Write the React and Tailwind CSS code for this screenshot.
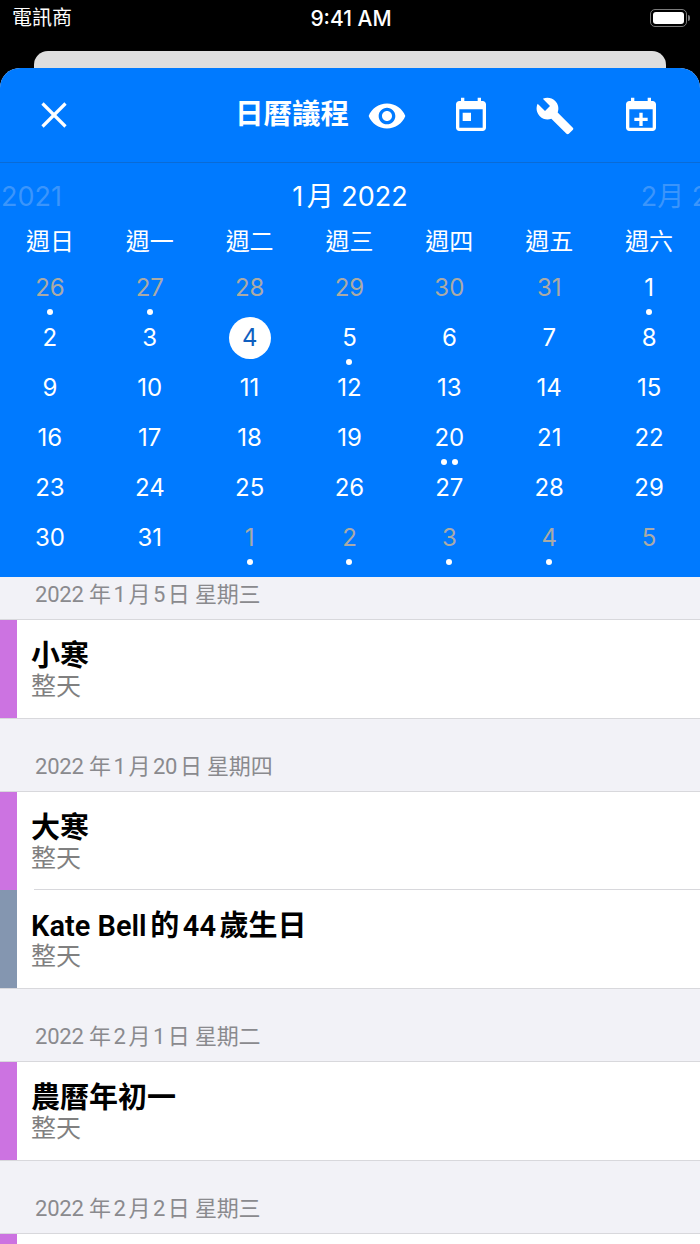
import { X } from 'lucide-react';

const font = { fontFamily: 'Inter, "Noto Sans CJK TC", sans-serif' };
const labelFont = { fontFamily: 'Roboto, "Noto Sans CJK TC", sans-serif' };

const CAL_FRAME = 'M19 3h-1V1h-2v2H8V1H6v2H5c-1.11 0-1.99.9-1.99 2L3 19c0 1.1.89 2 2 2h14c1.1 0 2-.9 2-2V5c0-1.1-.9-2-2-2zm0 16H5V8h14v11z';

const Icon = ({ d, className }) => (
  <svg viewBox="0 0 24 24" fill="white" className={`mt-[2px] h-10 w-10 shrink-0 ${className}`}>
    <path d={d} />
  </svg>
);

const weekdays = ['週日', '週一', '週二', '週三', '週四', '週五', '週六'];

// n = number, muted = other month, dots = event dots, selected = today circle
const weeks = [
  [{ n: 26, muted: true, dots: 1 }, { n: 27, muted: true, dots: 1 }, { n: 28, muted: true }, { n: 29, muted: true }, { n: 30, muted: true }, { n: 31, muted: true }, { n: 1, dots: 1 }],
  [{ n: 2 }, { n: 3 }, { n: 4, selected: true }, { n: 5, dots: 1 }, { n: 6 }, { n: 7 }, { n: 8 }],
  [{ n: 9 }, { n: 10 }, { n: 11 }, { n: 12 }, { n: 13 }, { n: 14 }, { n: 15 }],
  [{ n: 16 }, { n: 17 }, { n: 18 }, { n: 19 }, { n: 20, dots: 2 }, { n: 21 }, { n: 22 }],
  [{ n: 23 }, { n: 24 }, { n: 25 }, { n: 26 }, { n: 27 }, { n: 28 }, { n: 29 }],
  [{ n: 30 }, { n: 31 }, { n: 1, muted: true, dots: 1 }, { n: 2, muted: true, dots: 1 }, { n: 3, muted: true, dots: 1 }, { n: 4, muted: true, dots: 1 }, { n: 5, muted: true }],
];

const Day = ({ day }) => (
  <div className="relative flex h-[50px] items-center justify-center">
    {day.selected && <div className="absolute top-[4px] h-[42px] w-[42px] rounded-full bg-white" />}
    <span className={`relative -mt-[1px] text-[24px] leading-none ${day.selected ? 'text-[#0f5fbf]' : day.muted ? 'text-[#abaaa6]' : 'text-white'}`}>
      {day.n}
    </span>
    {day.dots > 0 && (
      <div className="absolute bottom-[-2px] flex gap-[5px]">
        {Array.from({ length: day.dots }).map((_, i) => (
          <div key={i} className="h-[6px] w-[6px] rounded-full bg-white" />
        ))}
      </div>
    )}
  </div>
);

const Row = ({ color, title, divider }) => (
  <div className="relative flex h-[98px] bg-white">
    <div className={`w-[17px] ${color}`} />
    {title && (
      <div className="pl-[14px] pt-[20px]">
        <div style={labelFont} className="text-[29px] font-semibold leading-[33px] text-black [text-autospace:normal]">{title}</div>
        <div className="-mt-[2px] text-[25px] leading-[30px] text-[#808080]">整天</div>
      </div>
    )}
    {divider && <div className="absolute bottom-0 left-[34px] right-0 h-px bg-[#d8d8dc]" />}
  </div>
);

const SectionHeader = ({ label, first }) => (
  <div className={`flex items-end border-b border-[#d8d8dc] pb-[10px] pl-[35px] ${first ? 'h-[43px]' : 'h-[73px]'}`}>
    <span style={labelFont} className="text-[22px] leading-[28px] tracking-[-0.2px] text-[#8a8a8e] [text-autospace:normal]">{label}</span>
  </div>
);

export default function App() {
  return (
    <div style={font} className="h-[1244px] w-[700px] overflow-hidden bg-black">
      {/* status bar */}
      <div className="flex h-[36px] items-center justify-between pl-[12px] pr-[10px] text-white">
        <span className="w-[120px] text-[20px] leading-none">電訊商</span>
        <span className="text-[21px] font-medium leading-none">9:41 AM</span>
        <div className="flex w-[120px] items-center justify-end">
          <div className="h-[18px] w-[37px] rounded-[5px] border-[1.5px] border-[#7a7a7a] p-[2px]">
            <div className="h-full w-full rounded-[3px] bg-white" />
          </div>
          <div className="ml-[1px] h-[6px] w-[2px] rounded-r-sm bg-[#7a7a7a]" />
        </div>
      </div>
      {/* card peeking behind */}
      <div className="mx-[34px] mt-[15px] h-[17px] rounded-t-[14px] bg-[#dedede]" />
      {/* sheet */}
      <div className="h-[1176px] overflow-hidden rounded-t-[20px] bg-[#f2f2f7]">
        <div className="bg-[#007aff] text-white">
          <div className="flex h-[95px] items-center border-b border-[#0a6bd6] pb-[1px] pl-[31px]">
            <X className="h-[46px] w-[46px] shrink-0" strokeWidth={1.7} strokeLinecap="butt" />
            <span className="ml-[158px] w-[114px] whitespace-nowrap text-[28.5px] font-bold leading-none">日曆議程</span>
            <Icon className="ml-[18px]" d="M12 4.5C7 4.5 2.73 7.61 1 12c1.73 4.39 6 7.5 11 7.5s9.27-3.11 11-7.5c-1.73-4.39-6-7.5-11-7.5zM12 17c-2.76 0-5-2.24-5-5s2.24-5 5-5 5 2.24 5 5-2.24 5-5 5zm0-8c-1.66 0-3 1.34-3 3s1.34 3 3 3 3-1.34 3-3-1.34-3-3-3z" />
            <Icon className="ml-[44px]" d={`${CAL_FRAME}M7 10h5v5H7z`} />
            <Icon className="ml-[44px]" d="M22.7 19l-9.1-9.1c.9-2.3.4-5-1.5-6.9-2-2-5-2.4-7.4-1.3L9 6 6 9 1.6 4.7C.4 7.1.9 10.1 2.9 12.1c1.9 1.9 4.6 2.4 6.9 1.5l9.1 9.1c.4.4 1 .4 1.4 0l2.3-2.3c.5-.4.5-1.1.1-1.4z" />
            <Icon className="ml-[46px]" d={`${CAL_FRAME}M13 10h-2v3H8v2h3v3h2v-3h3v-2h-3z`} />
          </div>
          <div className="grid h-[60px] grid-cols-[1fr_auto_1fr] items-center pt-[6px] text-[27px] leading-none">
            <span className="pl-[1px] text-[#3b95fb]">2021</span>
            <span className="[text-autospace:normal]">1月 2022</span>
            <span className="overflow-hidden whitespace-nowrap pl-[233px] text-[#3b95fb]">2月 2022</span>
          </div>
          <div className="grid h-[38px] grid-cols-7 items-center pr-[1px] text-center text-[24px] leading-none">
            {weekdays.map((w) => (
              <span key={w}>{w}</span>
            ))}
          </div>
          <div className="pb-[14px] pr-[1px] pt-[2px]">
            {weeks.map((week, i) => (
              <div key={i} className="grid grid-cols-7">
                {week.map((day, j) => (
                  <Day key={j} day={day} />
                ))}
              </div>
            ))}
          </div>
        </div>
        <SectionHeader first label="2022 年1月5日 星期三" />
        <Row color="bg-[#cc73e1]" title="小寒" />
        <div className="h-px bg-[#d8d8dc]" />
        <SectionHeader label="2022 年1月20日 星期四" />
        <Row color="bg-[#cc73e1]" title="大寒" divider />
        <Row color="bg-[#8496b0]" title="Kate Bell的44歲生日" />
        <div className="h-px bg-[#d8d8dc]" />
        <SectionHeader label="2022 年2月1日 星期二" />
        <Row color="bg-[#cc73e1]" title="農曆年初一" />
        <div className="h-px bg-[#d8d8dc]" />
        <SectionHeader label="2022 年2月2日 星期三" />
        <Row color="bg-[#cc73e1]" />
      </div>
    </div>
  );
}
